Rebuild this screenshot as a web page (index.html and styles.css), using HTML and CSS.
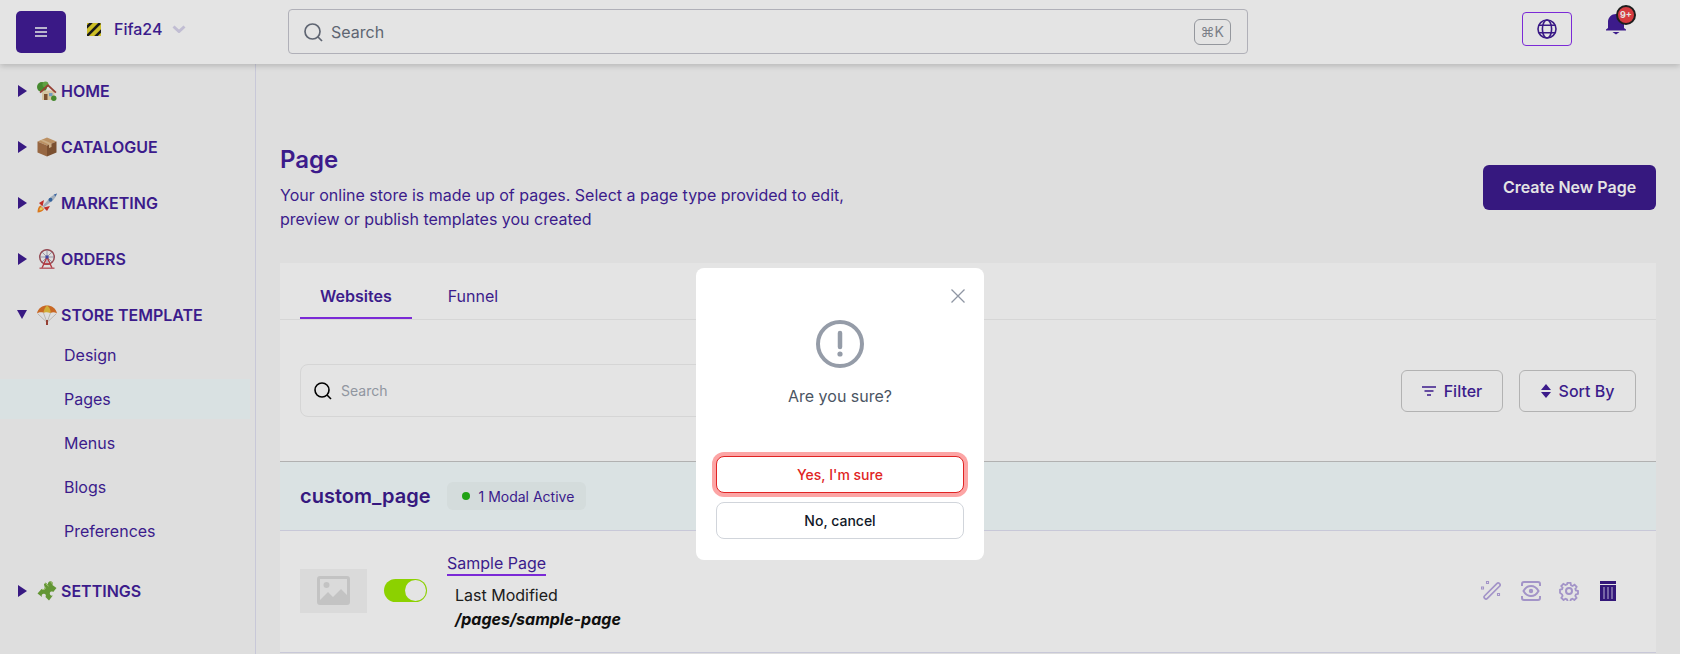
FILE: index.html
```html
<!DOCTYPE html>
<html lang="en">
<head>
    <meta charset="utf-8">
    <title>Pages</title>
    <link rel="stylesheet" href="styles.css">
</head>
<body>
<div class="app">
    <header class="topbar">
        <button class="menu-btn">
            <svg width="12" height="10" viewBox="0 0 12 10"><path d="M0 1h12M0 5h12M0 9h12" stroke="#cfcbe6" stroke-width="2"/></svg>
        </button>
        <div class="brand">
            <svg class="brand-logo" width="14" height="13" viewBox="0 0 14 13">
                <rect width="14" height="13" fill="#e6d62c"/>
                <path d="M-2 6 5-1M0 13 13 0M7 15 16 6" stroke="#1d1d1d" stroke-width="2.600"/>
            </svg>
            <span class="brand-name">Fifa24</span>
            <svg width="14" height="8" viewBox="0 0 14 8"><path d="M1.500 1.500 7 6.500l5.500-5" fill="none" stroke="#d8d4ec" stroke-width="3"/></svg>
        </div>
        <div class="top-search">
            <svg width="20" height="20" viewBox="0 0 20 20" fill="none" stroke="#6b7280" stroke-width="1.700"><circle cx="9.500" cy="9.500" r="7.500"/><path d="m15 15 4 4"/></svg>
            <span class="top-search-text">Search</span>
            <span class="kbd">⌘K</span>
        </div>
        <button class="globe-btn">
            <svg width="20" height="20" viewBox="0 0 20 20" fill="none" stroke="#411d96" stroke-width="1.600"><circle cx="10" cy="10" r="9"/><ellipse cx="10" cy="10" rx="4.600" ry="9"/><path d="M2 6.200h16M2 13.800h16"/></svg>
        </button>
        <div class="bell">
            <svg width="20" height="23" viewBox="0 0 20 23"><path d="M2 16V10c0-4.500 3.500-8 8-8s8 3.500 8 8v6l2 1.500v1H0v-1z" fill="#441f9c"/><path d="M6.500 20h7L10 22.500z" fill="#441f9c"/></svg>
            <span class="bell-badge">9+</span>
        </div>
    </header>

    <div class="layout">
        <nav class="sidebar">
            <div class="nav-head">
                <i class="caret"></i>
                <svg class="emoji" viewBox="0 0 20 20">
                    <circle cx="5" cy="6" r="5" fill="#4f9a35"/><circle cx="8.500" cy="3.500" r="3" fill="#6cb54a"/>
                    <rect x="5" y="9.500" width="12.500" height="9.500" fill="#efdcb6"/>
                    <path d="M2.500 11 11 3l8.500 8-1.200 1.200L11 5.500l-7.300 6.700z" fill="#a8483a"/>
                    <rect x="7" y="13" width="3.500" height="6" fill="#8a5a36"/><rect x="12" y="12" width="3.500" height="3.200" fill="#7fb0d6"/>
                    <circle cx="16.800" cy="17.300" r="2.700" fill="#4f9a35"/>
                </svg>
                HOME
            </div>
            <div class="nav-head">
                <i class="caret"></i>
                <svg class="emoji" viewBox="0 0 20 20">
                    <path d="M10 .500 19.500 4.500 10 8.500.500 4.500z" fill="#d2a26f"/>
                    <path d="M.500 4.500 10 8.500v11L.500 15.500z" fill="#a9744a"/>
                    <path d="M19.500 4.500 10 8.500v11l9.500-4z" fill="#8a5a36"/>
                    <path d="M5.500 2.500 14.500 6.500v3.500l-2.500 1V7.500L3.500 3.500z" fill="#e3c195"/>
                </svg>
                CATALOGUE
            </div>
            <div class="nav-head">
                <i class="caret"></i>
                <svg class="emoji" viewBox="0 0 20 20">
                    <path d="M.500 19.500c0-3.500 1-6 3-7l3.500 3.500c-1 2-3.500 3.500-6.500 3.500z" fill="#f5861f"/>
                    <path d="M2.500 17.500c0-1.800.5-3 1.700-3.600l1.900 1.900c-.6 1.100-1.800 1.700-3.600 1.700z" fill="#fde26a"/>
                    <path d="M2 10 7 7l-1.500 6.500z" fill="#d8342c"/><path d="M10 18l3-5-6.500 1.500z" fill="#d8342c"/>
                    <path d="M5.500 13 14 3.800C15.800 2.200 17.800 1 20 .500c-.500 2.200-1.700 4.200-3.300 6L7 14.500z" fill="#b4c2d2"/>
                    <path d="M16.500 1.800c1 .3 1.500 .8 1.800 1.800L20 .500z" fill="#3f6fb5"/>
                    <circle cx="13.500" cy="6.800" r="2" fill="#3c6fb0"/>
                </svg>
                MARKETING
            </div>
            <div class="nav-head">
                <i class="caret"></i>
                <svg class="emoji" viewBox="0 0 20 20" fill="none" stroke="#a9545e">
                    <circle cx="10" cy="8" r="7.300" stroke-width="1.500"/>
                    <path d="M10 .700v14.600M2.700 8h14.600M4.800 2.800l10.400 10.400M15.200 2.800 4.800 13.200" stroke-width=".7" stroke="#8e8aa0"/>
                    <path d="M10 8 5 19M10 8l5 11M7 15h6" stroke="#c9414a" stroke-width="1.400"/>
                    <circle cx="10" cy="8" r="1.700" fill="#4a4fb5" stroke="none"/>
                    <path d="M2.500 19.200h15" stroke="#c9646c" stroke-width="1.400"/>
                </svg>
                ORDERS
            </div>
            <div class="nav-head nav-head-open">
                <i class="caret caret-down"></i>
                <svg class="emoji" viewBox="0 0 20 20">
                    <path d="M0 8.500C1 3 5.500 .500 10 .500S19 3 20 8.500c-2-1.500-4.500-1.700-6.300-.6-1-1-6-1.200-7.300-.2C4.500 7 2 7 0 8.500z" fill="#e0752a"/>
                    <path d="M6.400 7.700c.7-3.500 2-6 3.600-7.200 2 1.200 3.700 3.700 3.700 7.400-2-.8-5.300-1-7.300-.2z" fill="#e9c33f"/>
                    <path d="M1 9l8 7.500M6.500 8 9.500 16M13.500 8 10.500 16M19 9l-8 7.500" stroke="#bdb8b0" stroke-width=".7" fill="none"/>
                    <rect x="9" y="15" width="2" height="5" fill="#a8483a"/>
                </svg>
                STORE TEMPLATE
            </div>
            <ul class="sub-nav">
                <li>Design</li>
                <li class="active">Pages</li>
                <li>Menus</li>
                <li>Blogs</li>
                <li>Preferences</li>
            </ul>
            <div class="nav-head nav-head-last">
                <i class="caret"></i>
                <svg class="emoji" viewBox="0 0 20 20">
                    <path d="M11 3.500c-.300-2 1-3.500 2.800-3.200 1.800.2 2.600 2 1.600 3.600L19.500 7 16.200 11c-1.600-1-3.300-.300-3.400 1.300s1.400 2.800 3 2.200L12 19.500 8.500 16c1-1.800 0-3.300-1.700-3.200-1.700 0-2.600 1.500-1.800 3.200L.500 12.500l4-4.500c1.700.9 3.300 0 3.200-1.700-.1-1.400-.9-2.300-.700-3L8.500 1.500z" fill="#6fa83c"/>
                    <path d="M8.500 2.500l3 2.500M5 8.200c1.500.8 3.500.2 3.500-1.700M13.500 1c1 0 1.800.800 1.500 2" stroke="#c2e08e" stroke-width="1" fill="none"/>
                </svg>
                SETTINGS
            </div>
        </nav>

        <main class="content">
            <div class="page-head">
                <div>
                    <h1 class="page-title">Page</h1>
                    <p class="page-desc">Your online store is made up of pages. Select a page type provided to edit, preview or publish templates you created</p>
                </div>
                <button class="create-btn">Create New Page</button>
            </div>

            <section class="card">
                <div class="tabs">
                    <span class="tab tab-active">Websites</span>
                    <span class="tab">Funnel</span>
                </div>
                <div class="toolbar">
                    <div class="search">
                        <svg width="18" height="18" viewBox="0 0 18 18" fill="none" stroke="#000" stroke-width="1.600"><circle cx="8" cy="8" r="7"/><path d="m13 13 4 4"/></svg>
                        <span class="search-text">Search</span>
                    </div>
                    <button class="tool-btn tool-filter">
                        <svg width="14" height="10" viewBox="0 0 14 10"><path d="M0 1h14M2.500 5h9M5 9h4" stroke="#441f9c" stroke-width="1.500"/></svg>
                        Filter
                    </button>
                    <button class="tool-btn">
                        <svg width="10" height="14" viewBox="0 0 10 14"><path d="M5 0l5 6H0zM5 14 0 8h10z" fill="#441f9c"/></svg>
                        Sort By
                    </button>
                </div>
                <div class="group-row">
                    <span class="group-name">custom_page</span>
                    <span class="status"><i class="status-dot"></i>1 Modal Active</span>
                </div>
                <div class="page-row">
                    <div class="thumb">
                        <svg width="33" height="29" viewBox="0 0 33 29"><rect width="33" height="29" rx="3" fill="#dbdbdb"/><rect x="3" y="3" width="27" height="23" fill="#f4f4f4"/><circle cx="9.500" cy="9" r="3" fill="#dbdbdb"/><path d="M3 24l8-8 5 5 8-8 6 6v8H3z" fill="#dbdbdb"/></svg>
                    </div>
                    <span class="toggle"><i class="toggle-knob"></i></span>
                    <div class="page-info">
                        <a class="page-link">Sample Page</a>
                        <div class="page-meta">Last Modified</div>
                        <div class="page-path">/pages/sample-page</div>
                    </div>
                    <div class="row-icons">
                        <svg width="20" height="20" viewBox="0 0 20 20" fill="none" stroke="#b7a6e0" stroke-width="1.700"><rect x="9.200" y="-.500" width="3.800" height="21" rx="1.900" transform="rotate(45 11.100 10)"/><path d="M5.500.500h2v2h-2zM.500 6h2v2h-2zM16.500 12.500h2v2h-2z" stroke-width="1.100"/></svg>
                        <svg width="20" height="20" viewBox="0 0 20 20" fill="none" stroke="#b7a6e0" stroke-width="2"><path d="M1 5V3a2 2 0 0 1 2-2h14a2 2 0 0 1 2 2v2M1 15v2a2 2 0 0 0 2 2h14a2 2 0 0 0 2-2v-2"/><path d="M2.500 10c2-3.500 4.500-5 7.500-5s5.500 1.500 7.500 5c-2 3.500-4.500 5-7.500 5s-5.500-1.500-7.500-5z"/><circle cx="10" cy="10" r="2.200" fill="#b7a6e0" stroke="none"/></svg>
                        <svg class="icon-gear" width="20" height="20" viewBox="0 0 20 20" fill="none" stroke="#b7a6e0" stroke-width="2"><path d="M8.300 1h3.400l.5 2.600 1.700.8 2.300-1.400 2.300 2.500-1.500 2.200.6 1.600 2.400.6v3.300l-2.400.6-.6 1.700 1.400 2.100-2.400 2.400-2.200-1.400-1.700.7-.5 2.600H8.300l-.5-2.600-1.700-.7-2.200 1.400-2.400-2.400 1.400-2.100-.6-1.700L0 11.900V8.600l2.300-.6.600-1.600L1.400 4.500l2.300-2.500 2.400 1.400 1.700-.8z" transform="translate(1 1) scale(.9)"/><circle cx="10" cy="10" r="3"/></svg>
                        <svg width="16" height="20" viewBox="0 0 16 20"><path d="M0 0h16v3H0zM0 4h16v16H0z" fill="#3a1a88"/><path d="M4 6v12M8 6v12M12 6v12" stroke="#cfc6ea" stroke-width="1"/></svg>
                    </div>
                </div>
            </section>
        </main>
    </div>

    <div class="overlay">
        <div class="modal">
            <button class="modal-close">
                <svg width="14" height="14" viewBox="0 0 14 14"><path d="M.5.500l13 13M13.500.500l-13 13" stroke="#8f96a3" stroke-width="1.300"/></svg>
            </button>
            <svg class="modal-icon" width="48" height="48" viewBox="0 0 48 48" fill="none">
                <circle cx="24" cy="24" r="22" stroke="#959ca8" stroke-width="4"/>
                <path d="M24 13v14" stroke="#959ca8" stroke-width="4.500" stroke-linecap="round"/>
                <circle cx="24" cy="34" r="2.600" fill="#959ca8"/>
            </svg>
            <p class="modal-text">Are you sure?</p>
            <button class="modal-btn modal-yes">Yes, I'm sure</button>
            <button class="modal-btn modal-no">No, cancel</button>
        </div>
    </div>
</div>
</body>
</html>
```

FILE: styles.css
```css
* {
    box-sizing: border-box;
}
html, body {
    margin: 0;
    height: 100%;
    overflow: hidden;
    background: #fff;
}
body {
    font-family: Inter, "Noto Sans", sans-serif;
    font-size: 16px;
    color: #441f9c;
}
button {
    font-family: inherit;
    cursor: pointer;
}
.app {
    position: relative;
    width: 1680px;
    height: 654px;
    overflow: hidden;
    background: #f9f9f9;
}

/* top bar */
.topbar {
    position: relative;
    z-index: 2;
    display: flex;
    align-items: flex-start;
    height: 64px;
    padding-left: 16px;
    background: #fff;
    box-shadow: 0 2px 6px rgba(0, 0, 0, .18);
}
.menu-btn {
    display: flex;
    align-items: center;
    justify-content: center;
    width: 50px;
    height: 42px;
    margin-top: 11px;
    padding: 0;
    border: 0;
    border-radius: 5px;
    background: #411d96;
}
.brand {
    display: flex;
    align-items: center;
    width: 222px;
    height: 24px;
    margin-top: 17px;
    padding-left: 21px;
}
.brand-name {
    margin: 0 10px 0 13px;
    font-weight: 500;
}
.top-search {
    display: flex;
    align-items: center;
    width: 960px;
    height: 45px;
    margin-top: 9px;
    padding: 0 16px 0 14px;
    border: 1px solid #c5c5ce;
    border-radius: 4px;
}
.top-search-text {
    margin-left: 8px;
    color: #6b7280;
}
.kbd {
    margin-left: auto;
    padding: 0 6px;
    height: 26px;
    line-height: 24px;
    border: 1px solid #a6a9b0;
    border-radius: 6px;
    font-size: 14px;
    color: #8b9099;
}
.globe-btn {
    display: flex;
    align-items: center;
    justify-content: center;
    width: 50px;
    height: 34px;
    margin: 12px 0 0 274px;
    padding: 0;
    border: 1px solid #8a2ff0;
    border-radius: 4px;
    background: transparent;
}
.bell {
    position: relative;
    width: 20px;
    margin: 12px 0 0 34px;
}
.bell svg {
    display: block;
}
.bell-badge {
    position: absolute;
    top: -7px;
    left: 10px;
    width: 20px;
    height: 20px;
    border: 2px solid #222;
    border-radius: 50%;
    background: #f04248;
    color: #fff;
    font-size: 9px;
    font-weight: 700;
    line-height: 16px;
    text-align: center;
}

.layout {
    display: flex;
    height: 590px;
}

/* sidebar */
.sidebar {
    flex: none;
    width: 256px;
    border-right: 1px solid #e0e0f2;
}
.nav-head {
    display: flex;
    align-items: center;
    height: 56px;
    padding: 0 0 2px 18px;
    font-size: 16px;
    font-weight: 600;
}
.nav-head-open {
    height: 47px;
    padding: 6px 0 0 18px;
}
.nav-head-last {
    margin-top: 13px;
}
.caret {
    width: 0;
    height: 0;
    border-style: solid;
    border-width: 6px 0 6px 9px;
    border-color: transparent transparent transparent #3f1c92;
}
.caret-down {
    margin-left: -1px;
    border-width: 9px 5.500px 0 5.500px;
    border-color: #3f1c92 transparent transparent transparent;
}
.emoji {
    flex: none;
    width: 20px;
    height: 20px;
    margin: 0 4px 0 10px;
}
.sub-nav {
    display: flex;
    flex-direction: column;
    gap: 4px;
    margin: 0;
    padding: 0;
    list-style: none;
}
.sub-nav li {
    width: 250px;
    height: 40px;
    padding-left: 64px;
    line-height: 40px;
}
.sub-nav .active {
    background: #f3fcfd;
}

/* main column */
.content {
    flex: 1;
    min-width: 0;
    padding: 79px 24px 0;
}
.page-head {
    display: flex;
    align-items: center;
    justify-content: space-between;
}
.page-title {
    margin: 0 0 7px;
    padding-top: 1px;
    font-size: 24px;
    line-height: 32px;
    font-weight: 600;
}
.page-desc {
    width: 580px;
    margin: 0;
    line-height: 24px;
}
.create-btn {
    width: 173px;
    height: 45px;
    border: 0;
    border-radius: 6px;
    background: #3d1b8e;
    color: #fff;
    font-size: 16px;
    font-weight: 600;
}
.card {
    margin-top: 32px;
    background: #fff;
}
.tabs {
    display: flex;
    gap: 16px;
    height: 57px;
    padding-left: 20px;
    border-bottom: 1px solid #f0f0f0;
}
.tab {
    height: 56px;
    padding: 0 20px;
    line-height: 66px;
}
.tab-active {
    border-bottom: 2px solid #8a2ff0;
    font-weight: 600;
}
.toolbar {
    display: flex;
    align-items: center;
    gap: 16px;
    height: 141px;
    padding: 0 20px;
}
.search {
    display: flex;
    align-items: center;
    width: 500px;
    height: 53px;
    margin-right: auto;
    padding-left: 13px;
    border: 1px solid #efefef;
    border-radius: 8px;
}
.search-text {
    margin-left: 9px;
    font-size: 14px;
    color: #a2a8b3;
}
.tool-btn {
    display: flex;
    align-items: center;
    justify-content: center;
    gap: 8px;
    width: 117px;
    height: 42px;
    padding: 0;
    border: 1px solid #c8c8c8;
    border-radius: 6px;
    background: transparent;
    color: #441f9c;
    font-size: 16px;
    font-weight: 500;
}
.tool-filter {
    width: 102px;
}
.group-row {
    display: flex;
    align-items: center;
    gap: 16px;
    height: 70px;
    padding-left: 20px;
    border-top: 1px solid #c6c6c6;
    border-bottom: 1px solid #e0e0f2;
    background: #f4fdfe;
}
.group-name {
    font-size: 20px;
    font-weight: 600;
    color: #3d1b8e;
}
.status {
    display: flex;
    align-items: center;
    height: 28px;
    padding: 0 12px 0 15px;
    border-radius: 6px;
    background: #eef6f7;
    font-size: 14px;
}
.status-dot {
    width: 8px;
    height: 8px;
    margin-right: 9px;
    border-radius: 50%;
    background: #25b618;
}
.page-row {
    display: flex;
    align-items: center;
    height: 122px;
    padding: 0 40px 2px 20px;
    border-bottom: 1px solid #e0e0f2;
}
.thumb {
    display: flex;
    align-items: center;
    justify-content: center;
    width: 67px;
    height: 44px;
    background: #f4f4f4;
}
.toggle {
    display: flex;
    justify-content: flex-end;
    align-items: center;
    width: 43px;
    height: 23px;
    margin: 0 20px 0 17px;
    padding-right: 1px;
    border-radius: 12px;
    background: #9dea00;
}
.toggle-knob {
    width: 21px;
    height: 21px;
    border-radius: 50%;
    background: #fff;
}
.page-link {
    display: inline-block;
    height: 24px;
    margin-top: 1px;
    line-height: 22px;
    border-bottom: 2px solid #8a2ff0;
}
.page-meta {
    margin-top: 7px;
    padding-left: 8px;
    line-height: 24px;
    color: #222;
}
.page-path {
    padding-left: 8px;
    line-height: 24px;
    font-weight: 700;
    font-style: italic;
    color: #111;
}
.row-icons {
    display: flex;
    align-items: center;
    gap: 20px;
    margin-left: auto;
}
.icon-gear {
    margin: 0 1px 0 -2px;
}

/* modal */
.overlay {
    position: absolute;
    inset: 0;
    z-index: 5;
    display: flex;
    justify-content: center;
    align-items: flex-start;
    padding-top: 268px;
    background: rgba(0, 0, 0, .106);
}
.modal {
    position: relative;
    display: flex;
    flex-direction: column;
    align-items: center;
    width: 288px;
    height: 292px;
    padding: 52px 20px 20px;
    border-radius: 8px;
    background: #fff;
}
.modal-close {
    position: absolute;
    top: 21px;
    right: 19px;
    display: flex;
    padding: 0;
    border: 0;
    background: none;
}
.modal-text {
    margin: 16px 0 48px;
    line-height: 24px;
    color: #4b5563;
}
.modal-btn {
    width: 248px;
    height: 37px;
    padding: 0;
    border-radius: 8px;
    background: #fff;
    font-size: 14px;
    font-weight: 500;
}
.modal-yes {
    border: 1px solid #e02424;
    box-shadow: 0 0 0 4px #fca5a5;
    color: #e02424;
}
.modal-no {
    margin-top: 9px;
    border: 1px solid #d1d5db;
    color: #111827;
}
```
